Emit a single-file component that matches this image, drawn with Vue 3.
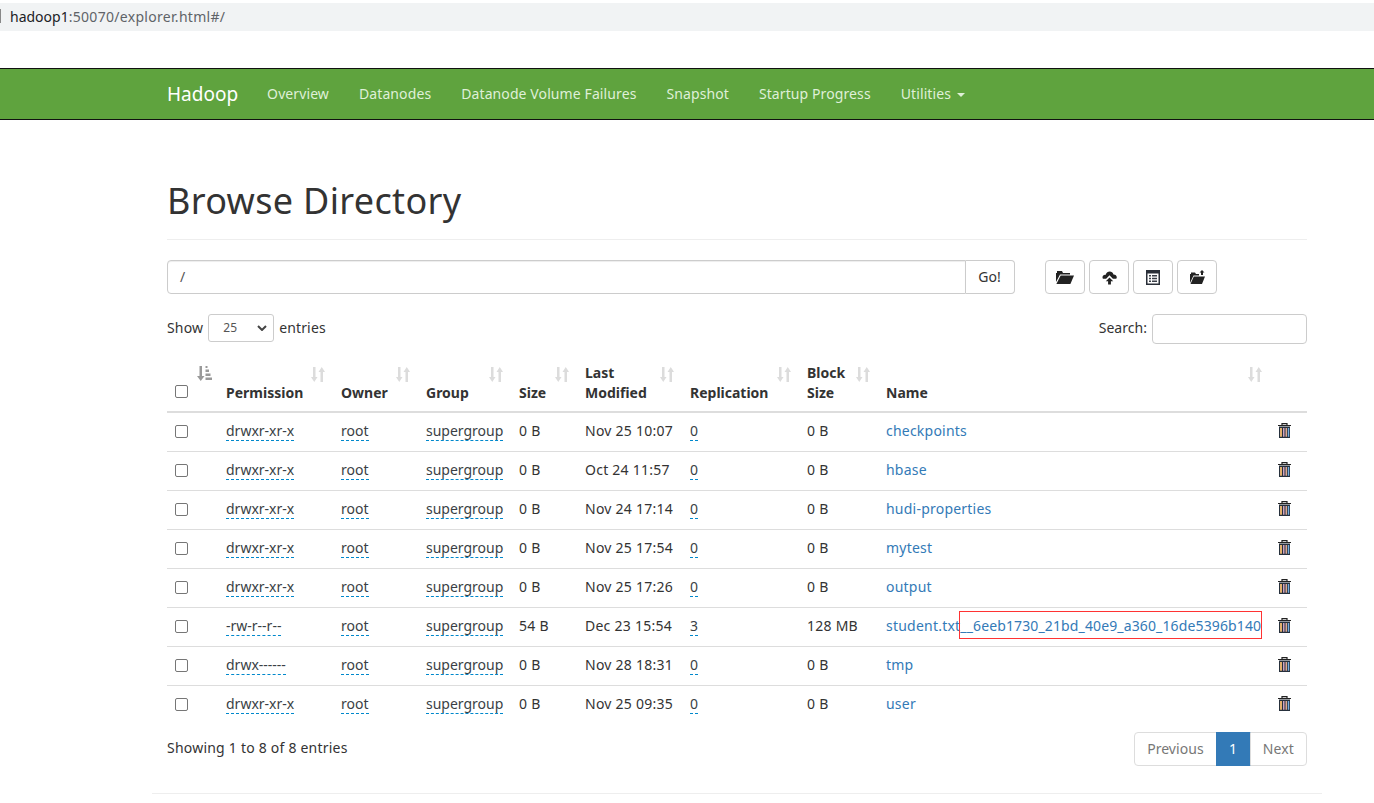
<script setup>
const rows = [
  ['drwxr-xr-x', '0 B', 'Nov 25 10:07', '0', '0 B', 'checkpoints'],
  ['drwxr-xr-x', '0 B', 'Oct 24 11:57', '0', '0 B', 'hbase'],
  ['drwxr-xr-x', '0 B', 'Nov 24 17:14', '0', '0 B', 'hudi-properties'],
  ['drwxr-xr-x', '0 B', 'Nov 25 17:54', '0', '0 B', 'mytest'],
  ['drwxr-xr-x', '0 B', 'Nov 25 17:26', '0', '0 B', 'output'],
  ['-rw-r--r--', '54 B', 'Dec 23 15:54', '3', '128 MB', 'student.txt', '__6eeb1730_21bd_40e9_a360_16de5396b140'],
  ['drwx------', '0 B', 'Nov 28 18:31', '0', '0 B', 'tmp'],
  ['drwxr-xr-x', '0 B', 'Nov 25 09:35', '0', '0 B', 'user'],
]
const heads = [
  ['c-perm', ['Permission']],
  ['c-owner', ['Owner']],
  ['c-group', ['Group']],
  ['c-size', ['Size']],
  ['c-mod', ['Last', 'Modified']],
  ['c-rep', ['Replication']],
  ['c-block', ['Block', 'Size']],
  ['c-name', ['Name']],
]
const navItems = ['Overview', 'Datanodes', 'Datanode Volume Failures', 'Snapshot', 'Startup Progress']
</script>

<template>
  <div class="page">
    <div class="urlbar"><span class="caret"></span><span class="host">hadoop1</span><span class="path">:50070/explorer.html#/</span></div>
    <nav class="nav">
      <div class="nav-in">
        <a class="brand">Hadoop</a>
        <a v-for="n in navItems" :key="n" class="nav-link">{{ n }}</a>
        <a class="nav-link">Utilities <span class="dd"></span></a>
      </div>
    </nav>
    <main class="container">
      <h1 class="title">Browse Directory</h1>
      <div class="toolbar">
        <div class="path-group">
          <div class="path-input">/</div>
          <div class="go">Go!</div>
        </div>
        <div class="btns">
          <div class="tbtn"><svg width="18" height="13" viewBox="0 0 18 13"><path d="M0 2h1V0h5l1 2h7v1.500H4L0 11z" fill="#222"/><path d="M4.600 4.500H18l-3.600 8.500H0.400z" fill="#222"/></svg></div>
          <div class="tbtn"><svg width="15" height="15" viewBox="0 0 16 15"><path d="M1 8.800C-.4 6.400 1.600 4 4 4.600 5 .4 11 -.2 12.200 4.200c2.600-.2 4.600 2.500 3 4.600H11.600L8 5.200 4.400 8.800z" fill="#222"/><path d="M8 7.500l4 4H9.500V15h-3v-3.500H4z" fill="#222"/></svg></div>
          <div class="tbtn"><svg width="14" height="15" viewBox="0 0 14 15"><path fill-rule="evenodd" d="M0 0h14v15H0zM1.500 3.500v10h11v-10z" fill="#2a2f38"/><path d="M3 5h2v1.500H3zM6 5h5v1.500H6zM3 7.700h2v1.500H3zM6 7.700h5v1.500H6zM3 10.400h2v1.500H3zM6 10.400h5v1.500H6z" fill="#3a3f48"/></svg></div>
          <div class="tbtn"><svg width="15" height="14" viewBox="0 0 15 14"><path d="M0 4h1V2.500h4L6 4h3v1.500H3.500L0 13z" fill="#222"/><path d="M3.800 6.500H15L12 14H.5z" fill="#222"/><path d="M12 0l2.500 2.500H13V5h-2V2.500H9.500z" fill="#222"/></svg></div>
        </div>
      </div>
      <div class="filters">
        <label class="len">Show <span class="select"><span>25</span><svg width="10" height="6" viewBox="0 0 10 6"><path d="M1 1l4 4 4-4" fill="none" stroke="#444" stroke-width="2"/></svg></span> entries</label>
        <label class="search">Search: <span class="search-input"></span></label>
      </div>
      <table class="tbl">
        <thead>
          <tr>
            <th class="c-check">
              <svg class="sort first" width="15" height="15" viewBox="0 0 15 15"><path d="M2.500 0h2.500v10H7.500l-3.750 5L0 10h2.500zM8.500 0h2v2h-2zM8.500 3.500h3.500v2.500H8.500zM8.500 7.500h5v2.500h-5zM8.500 11.500h6.500V14H8.500z" fill="#999"/></svg>
              <span class="box"></span>
            </th>
            <th v-for="h in heads" :key="h[0]" :class="h[0]">
              <svg class="sort" width="14" height="15" viewBox="0 0 14 15"><path d="M2 0h2.500v10H6.500L3.250 15 0 10h2zM9.500 15H12V5h2L10.750 0 7.500 5h2z" fill="#dcdcdc"/></svg>
              <template v-for="(l, i) in h[1]" :key="l"><br v-if="i" />{{ l }}</template>
            </th>
            <th class="c-del"></th>
          </tr>
        </thead>
        <tbody>
          <tr v-for="r in rows" :key="r[5]">
            <td class="c-check"><span class="box"></span></td>
            <td><a class="ed">{{ r[0] }}</a></td>
            <td><a class="ed">root</a></td>
            <td><a class="ed">supergroup</a></td>
            <td class="pl">{{ r[1] }}</td>
            <td class="pl">{{ r[2] }}</td>
            <td><a class="ed">{{ r[3] }}</a></td>
            <td class="pl">{{ r[4] }}</td>
            <td class="nm"><a class="lnk">{{ r[5] }}<span v-if="r[6]" class="mark">{{ r[6] }}</span></a></td>
            <td class="del">
              <svg width="13" height="15" viewBox="0 0 13 15"><path d="M4 2V.6h5V2M0 2.500h13" fill="none" stroke="#222" stroke-width="1.200"/><path d="M1 3.500h11V15H1z" fill="#26303c"/><path d="M2 5h2v8.800H2z" fill="#e3b06c"/><path d="M5 5h1.500v8.800H5z" fill="#cda4c4"/><path d="M7.500 5H9v8.800H7.500z" fill="#e0a890"/><path d="M9.800 5h1.400v8.800H9.800z" fill="#74aee0"/></svg>
            </td>
          </tr>
        </tbody>
      </table>
      <div class="foot">
        <div class="info">Showing 1 to 8 of 8 entries</div>
        <div class="pager"><span class="pg prev">Previous</span><span class="pg cur">1</span><span class="pg next">Next</span></div>
      </div>
      <hr class="rule" />
    </main>
  </div>
</template>

<style>
html, body { margin: 0; background: #fff; overflow: hidden; }
</style>

<style scoped>
.page { width: 1374px; height: 803px; overflow: hidden; font-family: "Noto Sans", "Open Sans", sans-serif; font-size: 14px; line-height: 20px; color: #333; }
.urlbar { margin-top: 3px; height: 28px; background: #f1f3f4; display: flex; align-items: center; padding-left: 10px; position: relative; font-size: 14px; }
.caret { position: absolute; left: 0; top: 6px; width: 1px; height: 14px; background: #888; }
.host { color: #202124; }
.path { color: #5f6368; letter-spacing: .3px; }
.nav { margin-top: 37px; height: 50px; background: #5fa33e; border-top: 1px solid #111; border-bottom: 1px solid #111; }
.nav-in { display: flex; align-items: center; height: 50px; padding-left: 167px; }
.brand { color: #fff; font-size: 19px; margin-right: 29px; }
.nav-link { color: #dff0d8; margin-right: 30px; white-space: nowrap; letter-spacing: .1px; }
.dd { display: inline-block; width: 0; height: 0; margin-left: 2px; vertical-align: middle; border-top: 4px solid #dff0d8; border-left: 4px solid transparent; border-right: 4px solid transparent; }
.container { margin-left: 152px; width: 1170px; padding: 0 15px; box-sizing: border-box; }
.title { margin: 58px 0 0; padding-bottom: 15px; height: 46px; font-size: 36px; line-height: 46px; font-weight: 400; letter-spacing: .33px; color: #333; border-bottom: 1px solid #eee; box-sizing: content-box; }
.toolbar { display: flex; margin-top: 20px; height: 34px; }
.path-group { display: flex; width: 848px; }
.path-input { flex: 1; border: 1px solid #ccc; border-radius: 4px 0 0 4px; padding: 6px 12px; color: #555; box-shadow: inset 0 1px 1px rgba(0,0,0,.075); }
.go { width: 49px; padding-right: 1px; box-sizing: border-box; border: 1px solid #ccc; border-left: 0; border-radius: 0 4px 4px 0; text-align: center; line-height: 32px; }
.btns { display: flex; gap: 4px; margin-left: 30px; }
.tbtn { width: 38px; height: 32px; border: 1px solid #ccc; border-radius: 4px; display: flex; align-items: center; justify-content: center; }
.filters { display: flex; justify-content: space-between; margin-top: 20px; height: 30px; }
.len { display: flex; align-items: flex-start; gap: 5px; line-height: 28px; letter-spacing: .15px; }
.select { display: flex; align-items: center; justify-content: space-between; width: 66px; height: 28px; box-sizing: border-box; border: 1px solid #ccc; border-radius: 3px; padding: 0 6px 0 14px; font-size: 12px; line-height: 28px; color: #555; }
.search { display: flex; gap: 5px; line-height: 28px; letter-spacing: .03px; }
.search-input { width: 155px; height: 30px; box-sizing: border-box; border: 1px solid #ccc; border-radius: 4px; }
.tbl { margin-top: 19px; width: 1140px; border-collapse: collapse; table-layout: fixed; }
th { position: relative; height: 49px; box-sizing: border-box; padding: 0 8px 8px; text-align: left; vertical-align: bottom; font-weight: 700; border-bottom: 2px solid #ddd; }
td { height: 39px; box-sizing: border-box; padding: 0 8px 2px; border-bottom: 1px solid #ddd; white-space: nowrap; }
tbody tr:last-child td { border-bottom: 0; }
.c-check { width: 51px; padding-left: 8px; }
th.c-check { padding-bottom: 13px; }
td.c-check { padding-bottom: 0; }
.c-perm { width: 115px; }
.c-owner { width: 85px; }
.c-group { width: 93px; }
.c-size { width: 66px; }
.c-mod { width: 105px; }
.c-rep { width: 117px; }
.c-block { width: 79px; }
.c-name { width: 392px; }
.c-del { width: 37px; }
.sort { position: absolute; top: 4px; right: 8px; }
.sort.first { right: 6px; top: 3px; }
.box { display: block; width: 13px; height: 13px; box-sizing: border-box; border: 1px solid #767676; border-radius: 2px; background: #fff; }
.pl { letter-spacing: .25px; }
.ed { color: #3a3f45; border-bottom: 1px dashed #08c; }
.lnk { color: #337ab7; letter-spacing: .22px; }
.mark { display: inline-block; position: relative; letter-spacing: .13px; }
.mark::after { content: ""; position: absolute; top: -5px; bottom: -3px; left: -1px; right: -1px; border: 1px solid #f33; }
.del svg { display: block; margin-top: -1px; }
.foot { display: flex; justify-content: space-between; align-items: flex-start; margin-top: 8px; }
.info { padding-top: 6px; line-height: 20px; letter-spacing: .22px; }
.pager { display: flex; }
.pg { height: 34px; box-sizing: border-box; padding: 6px 12px; border: 1px solid #ddd; color: #777; margin-left: -1px; letter-spacing: .15px; }
.prev { border-radius: 4px 0 0 4px; letter-spacing: .05px; }
.next { border-radius: 0 4px 4px 0; }
.cur { background: #337ab7; border-color: #337ab7; color: #fff; width: 35px; text-align: center; padding: 6px 0; }
.rule { margin: 27px -15px 0; border: 0; border-top: 1px solid #eee; }
</style>
